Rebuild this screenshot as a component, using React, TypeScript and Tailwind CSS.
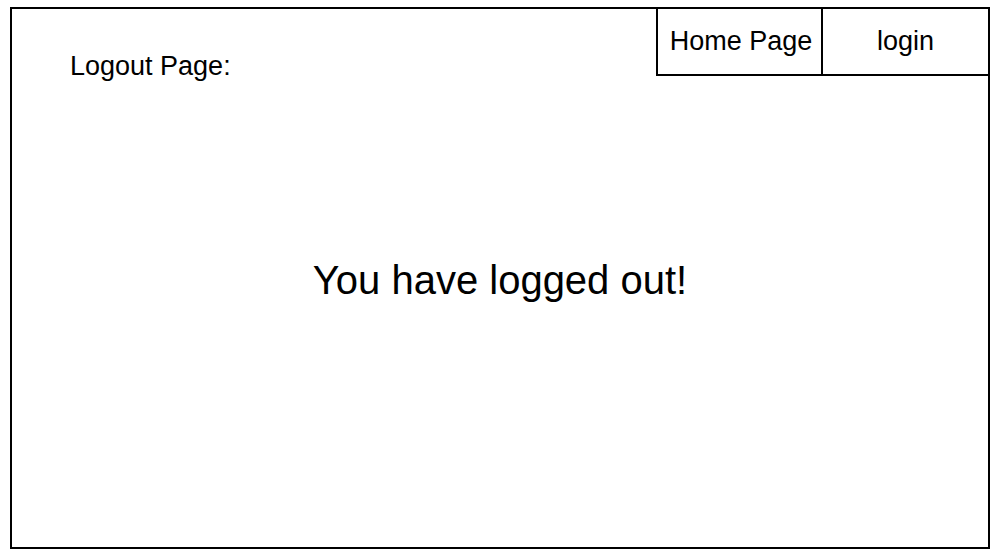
import React from 'react';

const App: React.FC = () => {
  return (
    <div className="w-[996px] h-[553px] bg-white pt-[7px] pl-[10px] font-['Liberation_Sans',Arial,sans-serif] text-black">
      <div className="w-[980px] h-[542px] border-2 border-black flex flex-col">
        {/* Header */}
        <div className="flex justify-between">
          <div className="pl-[58px] pt-[44px] text-[27px] leading-none">Logout Page:</div>
          <div className="flex">
            <div className="w-[165px] h-[67px] pl-[3px] border-l-2 border-b-2 border-black flex items-center justify-center text-[27px] leading-none">
              Home Page
            </div>
            <div className="w-[167px] h-[67px] border-l-2 border-b-2 border-black flex items-center justify-center text-[27px] leading-none">
              login
            </div>
          </div>
        </div>

        {/* Message */}
        <div className="flex-1 flex items-center justify-center pb-[67px]">
          <div className="text-[40px] leading-none">You have logged out!</div>
        </div>
      </div>
    </div>
  );
};

export default App;
